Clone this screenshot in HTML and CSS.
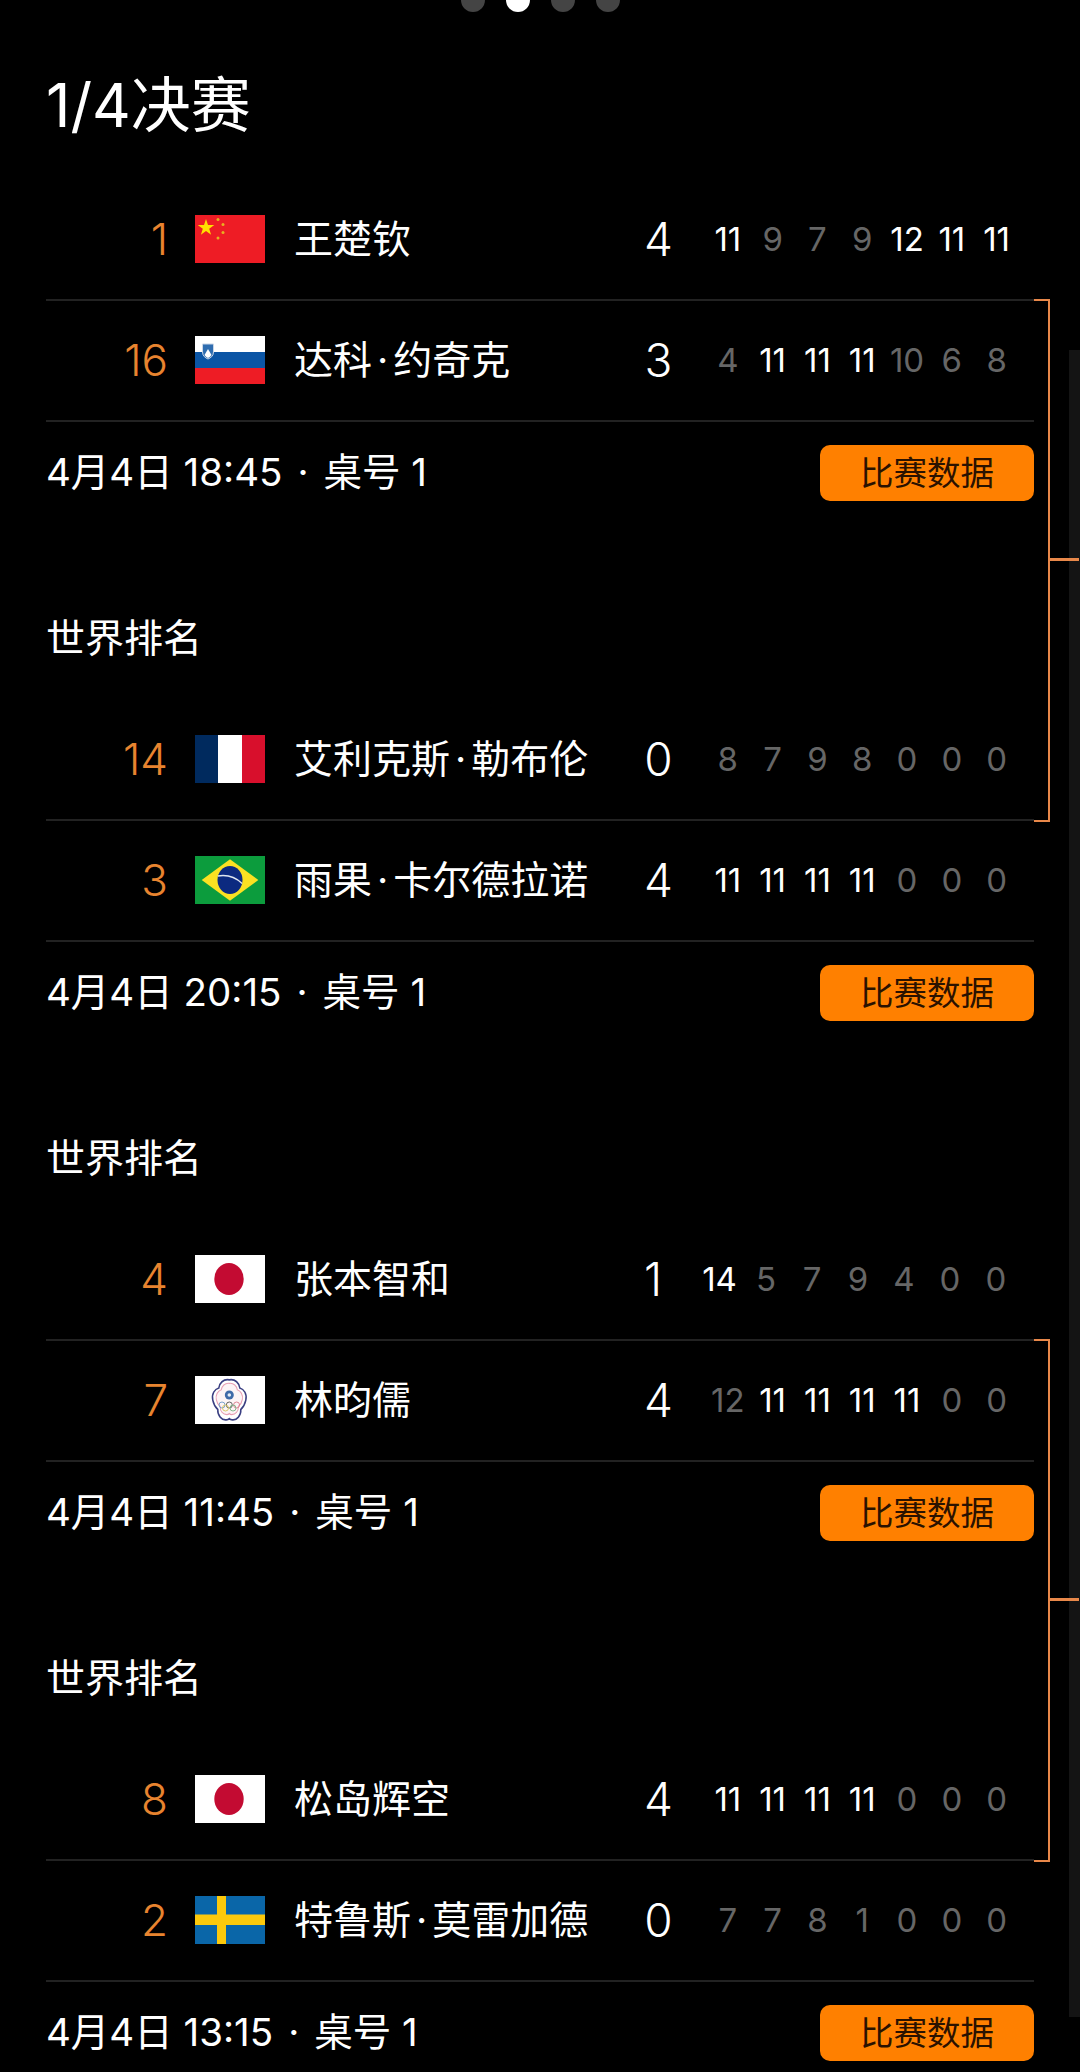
FILE: index.html
```html
<!DOCTYPE html>
<html lang="zh-CN">
<head>
    <meta charset="UTF-8">
    <meta name="viewport" content="width=device-width, initial-scale=1.0">
    <title>1/4决赛</title>
    <link rel="stylesheet" href="styles.css">
</head>
<body>

    <div class="scroll-strip"></div>

    <!-- Pager dots -->
    <div class="pager">
        <span class="dot"></span>
        <span class="dot active"></span>
        <span class="dot"></span>
        <span class="dot"></span>
    </div>

    <h1 class="round-title">1/4决赛</h1>

    <div class="draw">

        <!-- Match 1 -->
        <div class="match">
            <div class="bracket"></div>
            <div class="row">
                <span class="rank">1</span>
                <svg class="flag" viewBox="0 0 70 48">
                    <rect width="70" height="48" fill="#ee1c25"/>
                    <polygon points="11,5.500 13,11.500 19.300,11.500 14.200,15.200 16.100,21.200 11,17.500 5.900,21.200 7.800,15.200 2.700,11.500 9,11.500" fill="#ffe000" transform="translate(0 -1.500)"/>
                    <circle cx="23" cy="4.500" r="1.500" fill="#e8b020"/>
                    <circle cx="28" cy="9.500" r="1.500" fill="#e8b020"/>
                    <circle cx="28" cy="17.500" r="1.500" fill="#e8b020"/>
                    <circle cx="23" cy="23" r="1.500" fill="#e8b020"/>
                </svg>
                <span class="name">王楚钦</span>
                <span class="score">4</span>
                <div class="sets">
                    <span>11</span><span class="lost">9</span><span class="lost">7</span><span class="lost">9</span><span>12</span><span>11</span><span>11</span>
                </div>
            </div>
            <div class="row">
                <span class="rank">16</span>
                <svg class="flag" viewBox="0 0 70 48">
                    <rect width="70" height="16" fill="#fff"/>
                    <rect y="16" width="70" height="16" fill="#0b55a5"/>
                    <rect y="32" width="70" height="16" fill="#ee1c25"/>
                    <path d="M7.500 8h11v8c0 4-3 6-5.500 7-2.500-1-5.500-3-5.500-7z" fill="#2f6db0" stroke="#c9d6e6" stroke-width="1"/>
                    <path d="M9.500 19l3.500-6 3.500 6c-1 1.500-2.500 2.500-3.500 3-1-.5-2.500-1.500-3.500-3z" fill="#fff"/>
                </svg>
                <span class="name">达科<i class="mid">·</i>约奇克</span>
                <span class="score">3</span>
                <div class="sets">
                    <span class="lost">4</span><span>11</span><span>11</span><span>11</span><span class="lost">10</span><span class="lost">6</span><span class="lost">8</span>
                </div>
            </div>
            <div class="match-footer">
                <span class="match-time">4月4日 18:45<i class="sep">·</i>桌号 1</span>
                <a class="btn-data">比赛数据</a>
            </div>
        </div>

        <!-- Match 2 -->
        <h2 class="section-label">世界排名</h2>
        <div class="match">
            <div class="row">
                <span class="rank">14</span>
                <svg class="flag" viewBox="0 0 70 48">
                    <rect width="23" height="48" fill="#002a5e"/>
                    <rect x="23" width="24" height="48" fill="#fff"/>
                    <rect x="47" width="23" height="48" fill="#d80f2c"/>
                </svg>
                <span class="name">艾利克斯<i class="mid">·</i>勒布伦</span>
                <span class="score">0</span>
                <div class="sets">
                    <span class="lost">8</span><span class="lost">7</span><span class="lost">9</span><span class="lost">8</span><span class="lost">0</span><span class="lost">0</span><span class="lost">0</span>
                </div>
            </div>
            <div class="row">
                <span class="rank">3</span>
                <svg class="flag" viewBox="0 0 70 48">
                    <rect width="70" height="48" fill="#0c9c3d"/>
                    <polygon points="35,3.300 63.300,24 35,44.700 6.700,24" fill="#fbe122"/>
                    <ellipse cx="35" cy="24" rx="12.500" ry="14" fill="#0c2a80"/>
                    <path d="M22.800 20c9-1.500 17 .5 24.300 7.500" fill="none" stroke="#dfe6f0" stroke-width="1.500"/>
                </svg>
                <span class="name">雨果<i class="mid">·</i>卡尔德拉诺</span>
                <span class="score">4</span>
                <div class="sets">
                    <span>11</span><span>11</span><span>11</span><span>11</span><span class="lost">0</span><span class="lost">0</span><span class="lost">0</span>
                </div>
            </div>
            <div class="match-footer">
                <span class="match-time">4月4日 20:15<i class="sep">·</i>桌号 1</span>
                <a class="btn-data">比赛数据</a>
            </div>
        </div>

        <!-- Match 3 -->
        <h2 class="section-label">世界排名</h2>
        <div class="match">
            <div class="bracket"></div>
            <div class="row">
                <span class="rank">4</span>
                <svg class="flag" viewBox="0 0 70 48">
                    <rect width="70" height="48" fill="#fff"/>
                    <ellipse cx="34" cy="24" rx="14.700" ry="16" fill="#c30b32"/>
                </svg>
                <span class="name">张本智和</span>
                <span class="score score-one">1</span>
                <div class="sets sets-wide">
                    <span>14</span><span class="lost">5</span><span class="lost">7</span><span class="lost">9</span><span class="lost">4</span><span class="lost">0</span><span class="lost">0</span>
                </div>
            </div>
            <div class="row">
                <span class="rank">7</span>
                <svg class="flag" viewBox="0 0 70 48">
                    <rect width="70" height="48" fill="#fff"/>
                    <g transform="translate(34.300 3.300) scale(1 1.160) translate(-35 -3.500)">
                        <path d="M35 4c6-1 10 3 10.500 7 4 1 7.500 5 6 10.500-1 4-2.500 6-5 8 .5 5-4 9.500-8.500 9-1.500 0-2.500-.5-3-1-.5.500-1.500 1-3 1-4.500.5-9-4-8.500-9-2.500-2-4-4-5-8-1.500-5.500 2-9.500 6-10.500C25 7 29 3 35 4z" fill="#fff" stroke="#3a3f82" stroke-width="1.500"/>
                        <path d="M35 7c4.500-.5 7.500 2.500 8 5.500 3.500 1 6 4.500 5 8.500-.5 3-2 4.500-4 6 .5 4-3 7-6.500 7-1.200 0-2-.5-2.500-1-.5.500-1.300 1-2.500 1-3.500 0-7-3-6.500-7-2-1.500-3.500-3-4-6-1-4 1.500-7.500 5-8.500.5-3 3.500-6 8-5.500z" fill="#fdf4f6" stroke="#e8a0b4" stroke-width="1"/>
                    </g>
                    <circle cx="34.300" cy="19" r="4.500" fill="#3f6aa8"/>
                    <circle cx="34.300" cy="19" r="1.800" fill="#e4ecf6"/>
                    <g fill="none" stroke-width="0.900">
                        <circle cx="27" cy="29" r="3" stroke="#6d9bc9"/>
                        <circle cx="34.300" cy="29" r="3" stroke="#555"/>
                        <circle cx="41.600" cy="29" r="3" stroke="#d97a8a"/>
                        <circle cx="30.500" cy="32" r="3" stroke="#d8c35a"/>
                        <circle cx="38" cy="32" r="3" stroke="#7cb486"/>
                    </g>
                </svg>
                <span class="name">林昀儒</span>
                <span class="score">4</span>
                <div class="sets">
                    <span class="lost">12</span><span>11</span><span>11</span><span>11</span><span>11</span><span class="lost">0</span><span class="lost">0</span>
                </div>
            </div>
            <div class="match-footer">
                <span class="match-time">4月4日 11:45<i class="sep">·</i>桌号 1</span>
                <a class="btn-data">比赛数据</a>
            </div>
        </div>

        <!-- Match 4 -->
        <h2 class="section-label">世界排名</h2>
        <div class="match">
            <div class="row">
                <span class="rank">8</span>
                <svg class="flag" viewBox="0 0 70 48">
                    <rect width="70" height="48" fill="#fff"/>
                    <ellipse cx="34" cy="24" rx="14.700" ry="16" fill="#c30b32"/>
                </svg>
                <span class="name">松岛辉空</span>
                <span class="score">4</span>
                <div class="sets">
                    <span>11</span><span>11</span><span>11</span><span>11</span><span class="lost">0</span><span class="lost">0</span><span class="lost">0</span>
                </div>
            </div>
            <div class="row">
                <span class="rank">2</span>
                <svg class="flag" viewBox="0 0 70 48">
                    <rect width="70" height="48" fill="#0a66a8"/>
                    <rect x="22" width="9" height="48" fill="#fcc90c"/>
                    <rect y="18.500" width="70" height="10.500" fill="#fcc90c"/>
                </svg>
                <span class="name">特鲁斯<i class="mid">·</i>莫雷加德</span>
                <span class="score">0</span>
                <div class="sets">
                    <span class="lost">7</span><span class="lost">7</span><span class="lost">8</span><span class="lost">1</span><span class="lost">0</span><span class="lost">0</span><span class="lost">0</span>
                </div>
            </div>
            <div class="match-footer">
                <span class="match-time">4月4日 13:15<i class="sep">·</i>桌号 1</span>
                <a class="btn-data">比赛数据</a>
            </div>
        </div>

    </div>

</body>
</html>
```

FILE: styles.css
```css
html, body {
    height: 100%;
}

body {
    font-family: 'Inter', 'Noto Sans CJK SC', sans-serif;
    background: #000;
    margin: 0;
    padding: 0;
    color: #fff;
    overflow: hidden;
    position: relative;
}

/* Dark strip along the right edge */
.scroll-strip {
    position: absolute;
    top: 350px;
    right: 0;
    width: 11px;
    height: 1667px;
    background: #141414;
}

/* Pager */
.pager {
    display: flex;
    justify-content: center;
    gap: 21px;
    height: 12px;
    overflow: hidden;
}

.dot {
    width: 24px;
    height: 24px;
    margin-top: -12px;
    border-radius: 50%;
    background: #444;
}

.dot.active {
    background: #fff;
}

.round-title {
    font-size: 60px;
    font-weight: 400;
    line-height: 80px;
    margin: 53px 0 35px 46px;
}

.draw {
    padding: 0 46px;
}

.match {
    position: relative;
}

/* Orange line joining two matches */
.bracket {
    position: absolute;
    top: 119px;
    left: 988px;
    width: 14px;
    height: 519px;
    border: 2px solid #e8884a;
    border-left: none;
}

.bracket::after {
    content: '';
    position: absolute;
    top: 257px;
    left: 14px;
    width: 31px;
    height: 3px;
    background: #e8884a;
}

.row {
    display: flex;
    align-items: center;
    height: 118px;
    padding-bottom: 1px;
    border-bottom: 2px solid #222;
}

.rank {
    width: 122px;
    text-align: right;
    font-size: 44px;
    font-weight: 300;
    color: #e8842f;
}

.flag {
    width: 70px;
    height: 48px;
    margin-left: 27px;
    flex-shrink: 0;
}

.name {
    flex: 1;
    margin-left: 29px;
    padding-bottom: 7px;
    font-size: 39px;
    white-space: nowrap;
}

.mid {
    font-style: normal;
    margin: 0 5px;
}

.score {
    width: 40px;
    text-align: center;
    font-size: 46px;
    font-weight: 300;
}

.score-one {
    box-sizing: border-box;
    padding-left: 8px;
}

.sets {
    display: flex;
    margin-left: 27px;
    margin-right: 15px;
    font-size: 33px;
}

.sets span {
    width: 44.8px;
    text-align: center;
}

.sets-wide span {
    width: 46px;
}

.sets-wide span:first-child {
    width: 47px;
}

.sets .lost {
    color: #666;
}

/* Date line and button */
.match-footer {
    display: flex;
    align-items: center;
    justify-content: space-between;
    height: 56px;
    padding-top: 23px;
}

.match-time {
    line-height: 50px;
    padding-bottom: 2px;
    font-size: 38.5px;
    font-weight: 400;
}

.sep {
    font-style: normal;
    margin: 0 15px;
}

.btn-data {
    width: 214px;
    height: 56px;
    line-height: 56px;
    text-align: center;
    border-radius: 10px;
    background: #ff8000;
    color: #2a1200;
    font-size: 33.5px;
}

.section-label {
    font-size: 39px;
    font-weight: 400;
    line-height: 56px;
    margin: 109px 0 34px;
}
```
